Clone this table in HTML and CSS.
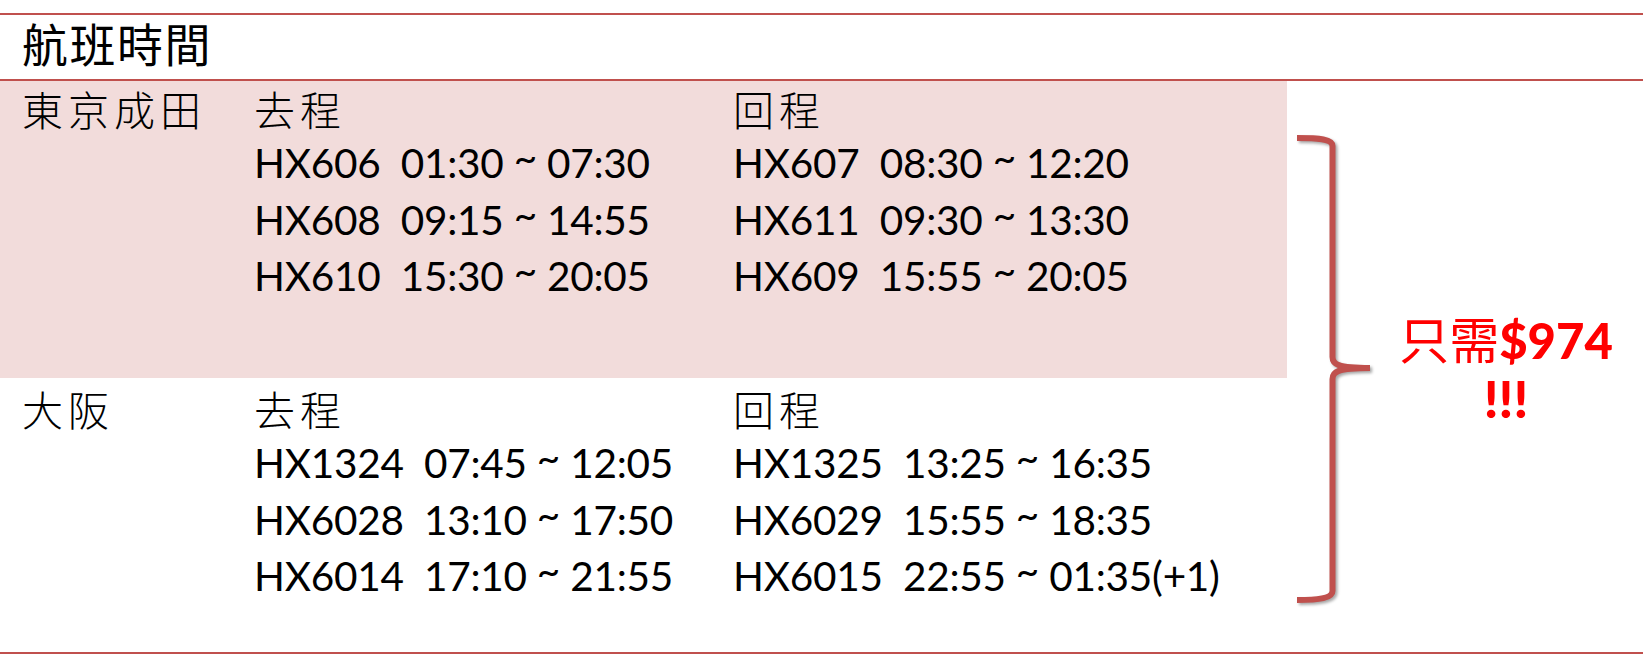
FILE: index.html
```html
<!DOCTYPE html>
<html lang="zh-Hant">
<head>
<meta charset="utf-8">
<title>航班時間</title>
<link rel="stylesheet" href="styles.css">
</head>
<body>
<div class="sheet">
  <div class="title">航班時間</div>
  <div class="body">
    <div class="table">
      <div class="group pink">
        <div class="col city"><div class="head">東京成田</div></div>
        <div class="col out">
          <div class="head">去程</div>
          <div class="flight">HX606  01:30 <span class="tilde">~</span> 07:30</div>
          <div class="flight">HX608  09:15 <span class="tilde">~</span> 14:55</div>
          <div class="flight">HX610  15:30 <span class="tilde">~</span> 20:05</div>
        </div>
        <div class="col back">
          <div class="head">回程</div>
          <div class="flight">HX607  08:30 <span class="tilde">~</span> 12:20</div>
          <div class="flight">HX611  09:30 <span class="tilde">~</span> 13:30</div>
          <div class="flight">HX609  15:55 <span class="tilde">~</span> 20:05</div>
        </div>
      </div>
      <div class="group plain">
        <div class="col city"><div class="head">大阪</div></div>
        <div class="col out">
          <div class="head">去程</div>
          <div class="flight">HX1324  07:45 <span class="tilde">~</span> 12:05</div>
          <div class="flight">HX6028  13:10 <span class="tilde">~</span> 17:50</div>
          <div class="flight">HX6014  17:10 <span class="tilde">~</span> 21:55</div>
        </div>
        <div class="col back">
          <div class="head">回程</div>
          <div class="flight">HX1325  13:25 <span class="tilde">~</span> 16:35</div>
          <div class="flight">HX6029  15:55 <span class="tilde">~</span> 18:35</div>
          <div class="flight">HX6015  22:55 <span class="tilde">~</span> 01:35(+1)</div>
        </div>
      </div>
    </div>
    <div class="aside">
      <svg class="brace" width="90" height="480" viewBox="0 0 90 480" aria-hidden="true">
        <path d="M7 10 C30 10 42.5 11 42.5 18 L42.5 229 C42.5 236 47 240 80 240 C47 240 42.5 244 42.5 251 L42.5 463 C42.5 470 30 472 7 472" fill="none" stroke="#c0504d" stroke-width="6"/>
      </svg>
      <div class="price">
        <div class="price-line"><span class="cjk">只需</span><span class="amount">$974</span></div>
        <div class="price-line bang">!!!</div>
      </div>
    </div>
  </div>
</div>
</body>
</html>
```

FILE: styles.css
```css
html, body {
  margin: 0;
  padding: 0;
  background: #ffffff;
}
body {
  width: 1643px;
  height: 656px;
  overflow: hidden;
  color: #000;
  font-family: "Lato", "Noto Sans CJK TC", sans-serif;
}
.sheet {
  margin-top: 13px;
  border-top: 2px solid #c0504d;
  border-bottom: 2px solid #c0504d;
}
.title {
  height: 66px;
  box-sizing: border-box;
  padding-left: 22px;
  padding-top: 2px;
  border-bottom: 2px solid #c0504d;
  font-family: "Noto Sans CJK TC", sans-serif;
  font-size: 46px;
  letter-spacing: 1.5px;
  line-height: 50px;
}
.body {
  display: flex;
  height: 571px;
}
.table {
  width: 1287px;
  flex: none;
}
.group {
  display: grid;
  grid-template-columns: 254px 479px 1fr;
  box-sizing: border-box;
}
.pink {
  background: #f2dcdb;
  height: 297px;
}
.plain {
  height: 274px;
  padding-top: 3px;
}
.col {
  display: flex;
  flex-direction: column;
}
.city {
  padding-left: 22px;
}
.head {
  height: 54px;
  font-family: "Noto Sans CJK TC", sans-serif;
  font-weight: 300;
  font-size: 41px;
  letter-spacing: 5px;
  line-height: 54px;
}
.flight {
  height: 56.5px;
  font-size: 40.5px;
  letter-spacing: -0.25px;
  line-height: 56.5px;
  white-space: pre;
}
.tilde {
  line-height: 0;
  vertical-align: 0.16em;
}
.aside {
  display: flex;
  align-items: flex-start;
}
.brace {
  margin-top: 47px;
  margin-left: 3px;
  flex: none;
  filter: drop-shadow(2px 2px 1.5px rgba(0, 0, 0, 0.35));
}
.price {
  margin-top: 226px;
  width: 252px;
  color: #ff0000;
  text-align: center;
}
.price-line {
  height: 61px;
  line-height: 61px;
  font-size: 49px;
  font-weight: 900;
  white-space: nowrap;
}
.price .cjk {
  font-family: "Noto Sans CJK TC", sans-serif;
  font-weight: 400;
  font-size: 50px;
}
.price .bang {
  font-size: 52px;
}
```
